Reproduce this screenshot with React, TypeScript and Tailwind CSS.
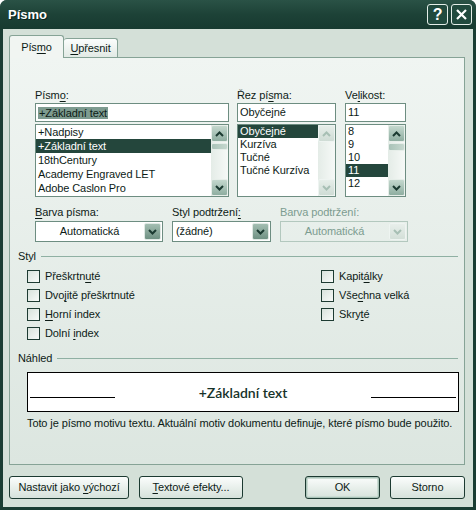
import type { ReactNode } from "react";

const FONT_ROWS = ["+Nadpisy", "+Základní text", "18thCentury", "Academy Engraved LET", "Adobe Caslon Pro"];
const STYLE_ROWS = ["Obyčejné", "Kurzíva", "Tučné", "Tučné Kurzíva"];
const SIZE_ROWS = ["8", "9", "10", "11", "12"];

const Chevron = ({ up, disabled }: { up?: boolean; disabled?: boolean }) => (
  <svg width="9" height="6" viewBox="0 0 9 6">
    <path
      d={up ? "M1 5 L4.5 1.5 L8 5" : "M1 1 L4.5 4.5 L8 1"}
      fill="none"
      stroke={disabled ? "#a7bfb4" : "#1b3a31"}
      strokeWidth="2"
    />
  </svg>
);

const ScrollButton = ({ up, disabled }: { up?: boolean; disabled?: boolean }) => (
  <div
    className={
      disabled
        ? "flex h-[17px] w-[17px] items-center justify-center rounded-[2px] border border-[#eef4f1] bg-gradient-to-b from-[#e6eee9] to-[#cfdcd5]"
        : "flex h-[17px] w-[17px] items-center justify-center rounded-[2px] border border-[#e6eee9] bg-gradient-to-b from-[#c4d8ce] to-[#8faea1]"
    }
  >
    <Chevron up={up} disabled={disabled} />
  </div>
);

const ScrollBar = ({ disabled, thumb }: { disabled?: boolean; thumb?: number }) => (
  <div className="flex h-full w-[17px] shrink-0 flex-col justify-between bg-gradient-to-r from-[#e4ece7] to-[#f6f9f7]">
    <div className="flex flex-col">
      <ScrollButton up disabled={disabled} />
      {thumb ? (
        <div
          className="mt-[1px] w-[17px] rounded-[2px] border border-[#e6eee9] bg-gradient-to-r from-[#a9c3b8] to-[#c6d8cf]"
          style={{ height: thumb }}
        />
      ) : null}
    </div>
    <ScrollButton disabled={disabled} />
  </div>
);

const U = ({ children }: { children: ReactNode }) => <span className="underline underline-offset-[2px]">{children}</span>;

const Field = ({ children }: { children: ReactNode }) => (
  <div className="flex h-[19px] items-center border border-[#6d8d81] bg-white px-[2px]">{children}</div>
);

const ListBox = ({
  rows,
  selected,
  rowH,
  disabledBar,
  thumb,
}: {
  rows: string[];
  selected: number;
  rowH: string;
  disabledBar?: boolean;
  thumb?: number;
}) => (
  <div className="mt-[2px] flex h-[73px] overflow-hidden border border-[#6d8d81] bg-white">
    <div className="flex flex-1 flex-col overflow-hidden">
      {rows.map((r, i) => (
        <div
          key={r}
          className={`${rowH} flex shrink-0 items-center whitespace-nowrap pl-[2px] ${
            i === selected ? "bg-[#24463c] text-white" : ""
          }`}
        >
          {r}
        </div>
      ))}
    </div>
    <ScrollBar disabled={disabledBar} thumb={thumb} />
  </div>
);

const Dropdown = ({ text, w, center, disabled }: { text: string; w: string; center?: boolean; disabled?: boolean }) => (
  <div
    className={`${w} flex h-[21px] items-center border ${
      disabled ? "border-[#b3c8be] text-[#7c9c90]" : "border-[#6d8d81] bg-white"
    }`}
  >
    <div className={`flex-1 whitespace-nowrap ${center ? "text-center" : "pl-[3px]"}`}>{text}</div>
    <div
      className={`m-[1px] flex h-[17px] w-[17px] items-center justify-center rounded-[2px] border ${
        disabled
          ? "border-[#eef4f1] bg-gradient-to-b from-[#e8efeb] to-[#d3dfd8]"
          : "border-[#dfe9e4] bg-gradient-to-b from-[#a3beb2] to-[#6f9183]"
      }`}
    >
      <Chevron disabled={disabled} />
    </div>
  </div>
);

const Check = ({ children }: { children: ReactNode }) => (
  <div className="flex h-[19px] items-center">
    <div className="h-[13px] w-[13px] border border-[#1d3b32] bg-gradient-to-br from-[#d8e2dc] to-[#f7faf8]" />
    <span className="ml-[5px] whitespace-nowrap">{children}</span>
  </div>
);

const Btn = ({ children, w, def }: { children: ReactNode; w: string; def?: boolean }) => (
  <div
    className={`${w} flex h-[23px] items-center justify-center rounded-[3px] border border-[#1c3a31] bg-gradient-to-b from-[#fbfdfc] to-[#d6e2db] ${
      def ? "shadow-[inset_0_0_0_1px_#a9c3b8,inset_0_0_0_2px_#cbdcd3]" : ""
    }`}
  >
    <span className="whitespace-nowrap">{children}</span>
  </div>
);

const GroupLabel = ({ children }: { children: ReactNode }) => (
  <div className="flex h-[13px] items-center pl-[8px] pr-[6px]">
    <span className="whitespace-nowrap">{children}</span>
    <div className="ml-[5px] h-px flex-1 bg-[#8fb0a3]" />
  </div>
);

export default function App() {
  return (
    <div className="flex h-[510px] w-[476px] flex-col overflow-hidden rounded-t-[7px] bg-[#1a3d33] font-['Liberation_Sans',Arial,sans-serif] text-[11px] leading-[13px] tracking-[-0.1px] text-[#0d1b16]">
      {/* title bar */}
      <div className="flex h-[29px] shrink-0 items-center justify-between bg-gradient-to-b from-[#2a5246] via-[#1d4237] to-[#173a30] pl-[8px] pr-[4px]">
        <span className="text-[13px] font-bold tracking-normal text-white [text-shadow:1px_1px_0_#0b211b]">Písmo</span>
        <div className="flex gap-[3px]">
          <div className="flex h-[21px] w-[21px] items-center justify-center rounded-[3px] border border-[#e4ede8] bg-[#214a3e]">
            <span className="text-[16px] font-bold leading-none text-white">?</span>
          </div>
          <div className="flex h-[21px] w-[21px] items-center justify-center rounded-[3px] border border-[#e4ede8] bg-[#214a3e]">
            <svg width="13" height="13" viewBox="0 0 13 13">
              <path d="M2 2 L11 11 M11 2 L2 11" stroke="white" strokeWidth="2.2" />
            </svg>
          </div>
        </div>
      </div>

      {/* body */}
      <div className="mx-[3px] mb-[3px] flex flex-1 flex-col bg-[#d4e0d8] pl-[6px] pt-[6px]">
        {/* tabs */}
        <div className="flex h-[22px] items-end">
          <div className="relative z-10 -mb-px flex h-[23px] w-[55px] items-start justify-center rounded-t-[3px] border border-b-0 border-[#86a396] bg-[#f1f5f2] pt-[5px]">
            <span>
              Pís<U>m</U>o
            </span>
          </div>
          <div className="flex h-[19px] w-[54px] items-center justify-center rounded-t-[3px] border border-b-0 border-l-0 border-[#86a396] bg-gradient-to-b from-[#fbfdfc] to-[#e2eae5]">
            <span>
              <U>U</U>přesnit
            </span>
          </div>
        </div>

        {/* panel */}
        <div className="flex h-[408px] w-[456px] flex-col border border-[#86a396] bg-gradient-to-b from-[#f0f5f2] to-[#dce6e0] pt-[31px]">
          {/* font / style / size */}
          <div className="flex pl-[25px]">
            <div className="w-[194px]">
              <div className="h-[14px]">
                Písm<U>o</U>:
              </div>
              <Field>
                <span className="bg-[#7d9b90] px-[1px] leading-[12px]">+Základní text</span>
              </Field>
              <ListBox rows={FONT_ROWS} selected={1} rowH="h-[14px]" thumb={7} />
            </div>
            <div className="ml-[8px] w-[99px]">
              <div className="h-[14px]">
                Řez pí<U>s</U>ma:
              </div>
              <Field>Obyčejné</Field>
              <ListBox rows={STYLE_ROWS} selected={0} rowH="h-[13px]" disabledBar />
            </div>
            <div className="ml-[9px] w-[61px]">
              <div className="h-[14px]">
                Ve<U>l</U>ikost:
              </div>
              <Field>11</Field>
              <ListBox rows={SIZE_ROWS} selected={3} rowH="h-[13px]" thumb={8} />
            </div>
          </div>

          {/* colour / underline */}
          <div className="mt-[9px] flex pl-[25px]">
            <div>
              <div className="h-[15px]">
                <U>B</U>arva písma:
              </div>
              <Dropdown text="Automatická" w="w-[128px]" center />
            </div>
            <div className="ml-[9px]">
              <div className="h-[15px]">
                Styl podtržení<U>:</U>
              </div>
              <Dropdown text="(žádné)" w="w-[99px]" />
            </div>
            <div className="ml-[9px]">
              <div className="h-[15px] text-[#7c9c90]">Barva podtržení:</div>
              <Dropdown text="Automatická" w="w-[128px]" center disabled />
            </div>
          </div>

          {/* styl */}
          <div className="mt-[8px]">
            <GroupLabel>Styl</GroupLabel>
          </div>
          <div className="mt-[4px] flex pl-[17px]">
            <div className="w-[294px]">
              <Check>
                Přeškrtn<U>u</U>té
              </Check>
              <Check>
                Dvo<U>j</U>itě přeškrtnuté
              </Check>
              <Check>
                <U>H</U>orní index
              </Check>
              <Check>
                Dolní <U>i</U>ndex
              </Check>
            </div>
            <div>
              <Check>
                Kapit<U>á</U>lky
              </Check>
              <Check>
                Vše<U>c</U>hna velká
              </Check>
              <Check>
                Skry<U>t</U>é
              </Check>
            </div>
          </div>

          {/* náhled */}
          <div className="mt-[9px]">
            <GroupLabel>Náhled</GroupLabel>
          </div>
          <div className="ml-[17px] mt-[7px] flex h-[40px] w-[432px] items-center justify-between border border-black bg-white px-[2px]">
            <div className="mt-[11px] h-px w-[85px] bg-black" />
            <span className="font-['Lato',sans-serif] text-[14px] font-semibold tracking-normal text-[#173229]">
              +Základní text
            </span>
            <div className="mt-[11px] h-px w-[85px] bg-black" />
          </div>
          <div className="ml-[17px] mt-[5px] whitespace-nowrap">
            Toto je písmo motivu textu. Aktuální motiv dokumentu definuje, které písmo bude použito.
          </div>
        </div>

        {/* buttons */}
        <div className="mt-[11px] flex w-[456px] justify-between">
          <div className="flex gap-[10px]">
            <Btn w="w-[120px]">
              Nastavit jako <U>v</U>ýchozí
            </Btn>
            <Btn w="w-[104px]">
              <U>T</U>extové efekty...
            </Btn>
          </div>
          <div className="flex gap-[10px]">
            <Btn w="w-[75px]" def>
              OK
            </Btn>
            <Btn w="w-[75px]">Storno</Btn>
          </div>
        </div>
      </div>
    </div>
  );
}
